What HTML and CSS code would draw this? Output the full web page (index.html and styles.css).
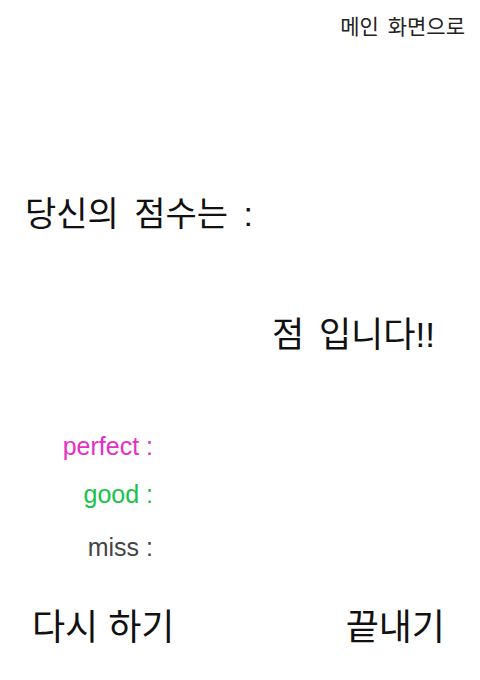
FILE: index.html
```html
<!DOCTYPE html>
<html lang="ko">
<head>
<meta charset="utf-8">
<link rel="stylesheet" href="styles.css">
</head>
<body>
<div class="page">
  <div class="topbar"><a class="home-link">메인 화면으로</a></div>
  <h1 class="title">당신의 점수는 :</h1>
  <div class="score">점 입니다!!</div>
  <div class="stats">
    <div class="stat perfect">perfect :</div>
    <div class="stat good">good :</div>
    <div class="stat miss">miss :</div>
  </div>
  <div class="actions">
    <button class="btn">다시 하기</button>
    <button class="btn">끝내기</button>
  </div>
</div>
</body>
</html>
```

FILE: styles.css
```css
* { box-sizing: border-box; }
html, body { margin: 0; padding: 0; background: #fff; }
body {
  width: 480px;
  height: 680px;
  font-family: "Liberation Sans", "Noto Sans CJK KR", sans-serif;
  color: #111;
}
.page {
  display: flex;
  flex-direction: column;
  height: 680px;
}
.topbar {
  display: flex;
  justify-content: flex-end;
  padding: 12px 15px 0 0;
}
.home-link {
  font-size: 21px;
  line-height: 30px;
  color: #222;
  word-spacing: 3px;
}
.title {
  margin: 150px 0 0 25px;
  font-size: 34px;
  font-weight: 400;
  line-height: 44px;
  word-spacing: 6px;
}
.score {
  margin: 77px 0 0 272px;
  font-size: 35px;
  line-height: 44px;
  word-spacing: 5px;
}
.stats {
  margin-top: 76px;
  width: 153px;
  display: flex;
  flex-direction: column;
  align-items: flex-end;
  font-family: "Liberation Sans", sans-serif;
  font-size: 25px;
}
.stat { line-height: 26px; }
.perfect { color: #e62ec3; }
.good { color: #17c24a; margin-top: 22px; }
.miss { color: #444; margin-top: 27px; }
.actions {
  margin-top: 44px;
  display: flex;
  justify-content: space-between;
  padding: 0 35px 0 32px;
}
.btn {
  border: 0;
  background: none;
  padding: 0;
  font-family: "Liberation Sans", "Noto Sans CJK KR", sans-serif;
  font-size: 36px;
  line-height: 48px;
  color: #111;
}
```
